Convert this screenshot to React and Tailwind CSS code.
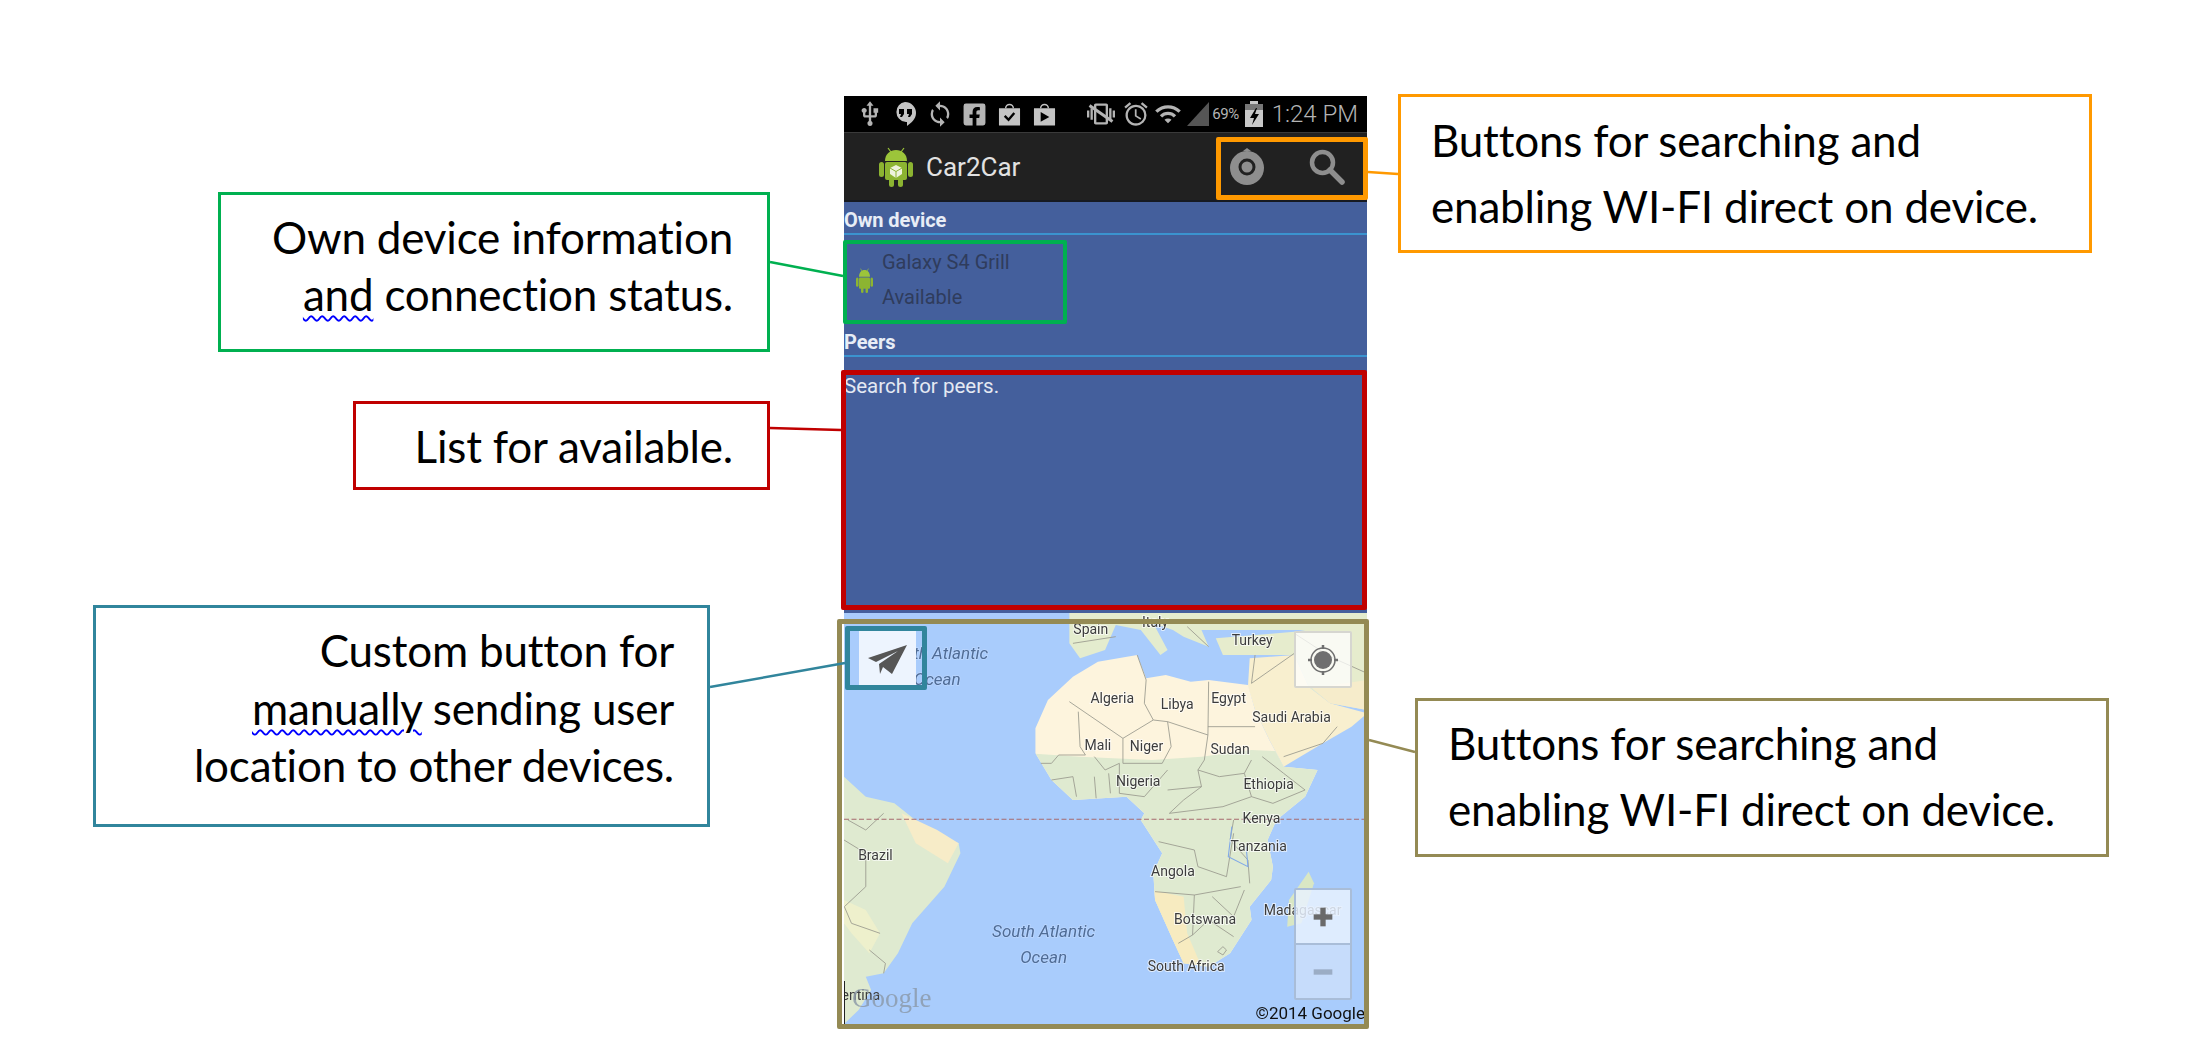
import React from "react";
import { Plus, Minus } from "lucide-react";
import { MdUsb, MdSync, MdAlarm, MdWifi, MdVibration } from "react-icons/md";
import { FaFacebookSquare } from "react-icons/fa";

const AFRICA =
  "M750,185 L860,165 L885,235 L940,225 L1010,245 L1060,240 L1170,255 L1190,330 L1230,420 L1270,500 L1365,510 L1330,590 L1250,660 L1225,720 L1240,800 L1235,840 L1175,920 L1180,960 L1120,1060 L1060,1100 L990,1090 L960,1020 L910,900 L905,820 L930,760 L870,660 L880,640 L830,590 L680,600 L620,540 L575,460 L575,385 L610,300 L680,230 Z";
const BRAZIL =
  "M39,530 L100,590 L180,610 L280,695 L360,730 L365,760 L320,860 L230,970 L190,1060 L150,1120 L100,1130 L115,1170 L80,1230 L39,1272 Z";

const borders = [
  "M670,305 L820,415 L905,360 L880,310 L885,240 L860,165",
  "M695,335 L700,440 L715,465 L640,465 L620,490 L590,490",
  "M905,360 L945,365 L1058,405 L1060,245",
  "M1058,380 L1190,380",
  "M1058,405 L1048,480 L1030,510 L1040,560 L945,570",
  "M945,365 L955,440 L930,490 L820,490 L820,415",
  "M810,490 L810,580 L880,590 L945,510",
  "M740,470 L770,510 L810,490",
  "M620,540 L680,530 L690,590",
  "M740,530 L745,595 M780,520 L785,580",
  "M1030,510 L1090,530 L1160,520 L1180,480",
  "M1160,520 L1180,590 L1240,610 L1330,570 L1270,520 L1210,470",
  "M1040,560 L990,600 L950,640 L1100,620 L1180,590",
  "M1130,660 L1120,720 L1170,780 L1175,850",
  "M920,725 L1020,750 L1030,800 L1110,830 L1130,700",
  "M910,875 L1020,885 L1150,860",
  "M1020,885 L1015,1005 L975,1030",
  "M1070,890 L1130,950 L1160,870",
  "M1015,1005 L1060,960 L1130,1010",
  "M1100,1040 L1085,1055 L1100,1065 L1110,1050 Z",
  "M50,660 L100,690 L150,640",
  "M39,720 L100,760 L100,860 L40,920 L60,970 L140,1000",
  "M110,1050 L155,1090 L150,1120",
  "M1190,165 L1180,250 L1300,160",
  "M1380,430 L1270,470 M1380,430 L1420,380",
  "M680,130 L800,110 M1000,80 L1060,140 M1300,100 L1400,170 L1504,220",
];

const labels = [
  ["Spain", 730, 103],
  ["Italy", 910, 80],
  ["Turkey", 1182, 136],
  ["Algeria", 790, 310],
  ["Libya", 972, 327],
  ["Egypt", 1116, 309],
  ["Saudi Arabia", 1292, 366],
  ["Mali", 750, 449],
  ["Niger", 886, 452],
  ["Sudan", 1120, 462],
  ["Nigeria", 863, 557],
  ["Ethiopia", 1228, 567],
  ["Kenya", 1208, 669],
  ["Tanzania", 1200, 754],
  ["Angola", 960, 829],
  ["Brazil", 127, 779],
  ["Botswana", 1050, 972],
  ["Madagascar", 1323, 945],
  ["South Africa", 997, 1113],
];

const oceans = [
  ["North Atlantic", 300, 178],
  ["Ocean", 300, 256],
  ["South Atlantic", 598, 1010],
  ["Ocean", 598, 1088],
];

function Android({ className, cube }) {
  return (
    <svg viewBox="0 0 34 40" preserveAspectRatio="none" className={className}>
      <path d="M9 1l3 4M25 1l-3 4" stroke="#9cc53a" strokeWidth="1.2" />
      <path d="M6 14C6 7 11 3 17 3s11 4 11 11z" fill="#9cc53a" />
      <rect x="6" y="15" width="22" height="18" rx="2" fill="#8cb431" />
      <rect x="0" y="15" width="5" height="15" rx="2.5" fill="#8cb431" />
      <rect x="29" y="15" width="5" height="15" rx="2.5" fill="#8cb431" />
      <rect x="10" y="31" width="5" height="9" rx="2.5" fill="#8cb431" />
      <rect x="19" y="31" width="5" height="9" rx="2.5" fill="#8cb431" />
      {cube && <path d="M17 18l6 3v6l-6 4-6-4v-6z" fill="#eef3dc" />}
      {cube && <path d="M17 24.500v6.500M11 21l6 3.500 6-3.500" stroke="#8cb431" strokeWidth="1" fill="none" />}
    </svg>
  );
}

function StatusBar() {
  return (
    <div className="h-[36px] bg-black flex items-center justify-between pl-[8px] pr-[9px] text-[#b4b4b4] shrink-0">
      <div className="flex items-center">
        <span className="w-[35px] flex justify-center"><MdUsb size={28} /></span>
        <span className="w-[35px] flex justify-center">
          <svg viewBox="0 0 24 26" className="w-[24px] h-[26px]">
            <path d="M12 1a11 11 0 0 1 11 11c0 6-5 10-9 13v-4a11 9 0 0 1-2-.2A10 10 0 0 1 12 1z" fill="#c4c4c4" />
            <path d="M6 8h5v5l-2 3H7l1-3H6zM14 8h5v5l-2 3h-2l1-3h-2z" fill="#000" />
          </svg>
        </span>
        <span className="w-[35px] flex justify-center"><MdSync size={28} /></span>
        <span className="w-[35px] flex justify-center"><FaFacebookSquare size={25} /></span>
        <span className="w-[35px] flex justify-center">
          <svg viewBox="0 0 24 24" className="w-[23px] h-[24px]">
            <path d="M1 6h22v18H1z" fill="#c4c4c4" />
            <path d="M7 14l4 4 6-7" stroke="#000" strokeWidth="2.500" fill="none" />
            <path d="M8 6a4 4 0 0 1 8 0" stroke="#c4c4c4" strokeWidth="1.500" fill="none" />
          </svg>
        </span>
        <span className="w-[35px] flex justify-center">
          <svg viewBox="0 0 24 24" className="w-[23px] h-[24px]">
            <path d="M1 6h22v18H1z" fill="#c4c4c4" />
            <path d="M8 6a4 4 0 0 1 8 0" stroke="#c4c4c4" strokeWidth="1.500" fill="none" />
            <path d="M8 10l9 5-9 5z" fill="#000" />
          </svg>
        </span>
      </div>
      <div className="flex items-center">
        <span className="relative w-[34px] flex justify-center">
          <MdVibration size={28} />
          <span className="absolute left-[3px] top-[12px] w-[28px] h-[3px] bg-[#b4b4b4] rotate-[35deg]" />
        </span>
        <span className="w-[32px] ml-[2px] flex justify-center"><MdAlarm size={28} /></span>
        <span className="w-[30px] ml-[1px] flex justify-center"><MdWifi size={28} /></span>
        <svg viewBox="0 0 22 24" className="w-[22px] h-[24px] ml-[4px]"><path d="M0 24L22 0v24z" fill="#555" /></svg>
        <span className="ml-[3px] text-[15px] tracking-[-0.5px] font-['Roboto',sans-serif]">69%</span>
        <svg viewBox="0 0 18 26" className="w-[18px] h-[26px] ml-[6px]">
          <path d="M5 0h8v3h5v23H0V3h5z" fill="#c8c8c8" />
          <path d="M0 3h18v6H0z" fill="#777" />
          <path d="M11 7l-6 10h4l-2 7 7-11h-4l2-6z" fill="#000" />
        </svg>
        <span className="ml-[9px] text-[24px] font-light font-['Roboto',sans-serif]">1:24 PM</span>
      </div>
    </div>
  );
}

function ActionBar() {
  return (
    <div className="h-[70px] bg-[#212121] border-t border-[#3a3a3a] border-b-2 border-b-[#161a22] flex items-center shrink-0">
      <Android cube className="ml-[35px] w-[34px] h-[40px]" />
      <span className="ml-[13px] mt-[1px] text-[26px] text-[#e2e2e2] font-['Roboto',sans-serif]">Car2Car</span>
      <svg viewBox="0 0 36 38" className="ml-auto w-[36px] h-[38px]">
        <circle cx="18" cy="20" r="17" fill="#8e8e8e" />
        <path d="M14 3l4-3 4 3z" fill="#8e8e8e" />
        <circle cx="18" cy="19" r="7" fill="#8e8e8e" stroke="#212121" strokeWidth="3" />
      </svg>
      <svg viewBox="0 0 36 36" className="ml-[44px] mr-[22px] w-[36px] h-[36px]">
        <circle cx="13.500" cy="13.500" r="10.500" fill="none" stroke="#8e8e8e" strokeWidth="4.500" />
        <path d="M21 21L33 33" stroke="#8e8e8e" strokeWidth="5.500" strokeLinecap="round" />
      </svg>
    </div>
  );
}

function SectionHead({ children }) {
  return (
    <div className="h-[33px] border-b-[2px] border-[#3b93cf] flex items-center pt-[5px] font-bold text-[20px] text-[#e8edf6] tracking-[-0.1px]">
      {children}
    </div>
  );
}

function DeviceLists() {
  return (
    <div className="h-[411px] bg-[#445f9c] font-['Roboto',sans-serif] shrink-0">
      <SectionHead>Own device</SectionHead>
      <div className="h-[89px] flex items-center">
        <Android className="ml-[12px] mr-[1px] w-[17px] h-[25px] mt-[1px]" />
        <div className="ml-[8px] text-[20px] leading-[35px] text-[#2f3c5c]">
          <div>Galaxy S4 Grill</div>
          <div>Available</div>
        </div>
      </div>
      <SectionHead>Peers</SectionHead>
      <div className="pt-[17px] text-[20.500px] leading-[24px] text-[#e4e9f3]">Search for peers.</div>
    </div>
  );
}

function MapView() {
  return (
    <div className="relative h-[411px] bg-[#a9ccfc] overflow-hidden shrink-0 blur-[0.4px]">
      <svg viewBox="0 0 523 411" className="absolute inset-0 w-full h-full font-['Roboto',sans-serif]">
        <defs>
          <clipPath id="africa"><path d={AFRICA} /></clipPath>
        </defs>
        <g transform="scale(0.35714 0.33333) translate(-39 -39)">
          <path d="M670,39 H1504 V90 H1040 L1060,140 L990,110 L960,90 L905,70 L945,150 L925,165 L870,90 L800,75 L770,150 L700,175 L670,130 Z" fill="#e4ecce" />
          <path d="M1080,115 L1300,95 L1504,60 L1504,330 L1400,310 L1340,260 L1300,165 L1100,165 Z" fill="#e6eccd" />
          <path d="M1175,175 L1300,165 L1340,260 L1400,310 L1504,340 L1460,380 L1380,430 L1270,500 L1230,420 L1190,330 L1170,260 Z" fill="#f8efcf" />
          <path d="M1350,265 L1504,240 L1504,330 L1400,310 Z" fill="#f6eccb" />
          <path d={AFRICA} fill="#fdf4dd" />
          <g clipPath="url(#africa)">
            <path d="M560,460 L700,470 L900,480 L1040,470 L1180,450 L1400,460 L1400,1120 L880,1120 Z" fill="#dfead0" />
            <path d="M900,870 L990,890 L1000,1000 L1040,1100 L960,1110 Z" fill="#f7ebc0" />
          </g>
          <path d={BRAZIL} fill="#dfead0" />
          <path d="M200,640 L300,690 L360,730 L330,790 L240,730 Z" fill="#f7ecc8" />
          <path d="M39,900 L100,930 L140,1000 L110,1060 L60,1000 L39,970 Z" fill="#eef0cc" />
          <path d="M1340,815 L1355,850 L1320,970 L1280,980 L1285,900 Z" fill="#d9e7c4" />
          <g fill="none" stroke="#9a9a8e" strokeWidth="2.500">
            {borders.map((d) => <path key={d} d={d} />)}
          </g>
          <path d="M1125,680 L1115,770 L1170,800 L1165,740" fill="none" stroke="#7fa8e8" strokeWidth="3" />
          <path d="M39,658 H1504" stroke="#a66a6e" strokeWidth="3" strokeDasharray="14 7" />
        </g>
        <g textAnchor="middle" fontSize="14" fill="#3c3c3c" stroke="#ffffff" strokeOpacity="0.65" strokeWidth="2" paintOrder="stroke">
          {labels.map(([name, x, y]) => (
            <text key={name} x={(x - 39) / 2.8} y={(y - 39) / 3}>{name}</text>
          ))}
        </g>
        <g textAnchor="middle" fontSize="17" fontStyle="italic" fill="#4f6c96" stroke="#c5dcff" strokeOpacity="0.7" strokeWidth="1.500" paintOrder="stroke">
          {oceans.map(([name, x, y]) => (
            <text key={name + y} x={(x - 39) / 2.8} y={(y - 39) / 3}>{name}</text>
          ))}
        </g>
        <text x="-24" y="387" fontSize="14" fill="#3c3c3c">Argentina</text>
        <text x="8" y="394" fontSize="27" fill="#8a97a6" fillOpacity="0.8" className="font-['Liberation_Serif',serif]">Google</text>
        <text x="521" y="406" fontSize="17" textAnchor="end" fill="#111">©2014 Google</text>
        <path d="M0.500 368V411" stroke="#222" strokeWidth="1" />
      </svg>

      {/* map controls lie over the map */}
      <div className="absolute left-[15px] top-[18px] w-[57px] h-[55px] bg-[#edf4fe] flex items-center justify-center">
        <svg viewBox="0 0 39 29" className="w-[39px] h-[29px] mt-[2px]">
          <path d="M0 13L39 0 24 29 15 22 12 29 11 19 30 6 8 17z" fill="#565656" />
        </svg>
      </div>
      <div className="absolute left-[450px] top-[18px] w-[58px] h-[57px] bg-white/75 border-2 border-[#d6d6d0] rounded-[2px] flex items-center justify-center">
        <svg viewBox="0 0 30 30" className="w-[30px] h-[30px]">
          <circle cx="15" cy="15" r="9" fill="#6f6f6f" />
          <circle cx="15" cy="15" r="12" fill="none" stroke="#6f6f6f" strokeWidth="1.500" />
          <path d="M15 0v4M15 26v4M0 15h4M26 15h4" stroke="#6f6f6f" strokeWidth="2.500" />
        </svg>
      </div>
      <div className="absolute left-[450px] top-[275px] w-[58px] h-[112px] border-2 border-[#a9bdd8] rounded-[2px] flex flex-col">
        <div className="h-[55px] bg-[#e8f1fe]/85 border-b-2 border-[#a9bdd8] flex items-center justify-center">
          <Plus size={32} strokeWidth={4} strokeLinecap="butt" className="text-[#6a6a6a]" />
        </div>
        <div className="flex-1 bg-[#c6dcfb] flex items-center justify-center">
          <Minus size={32} strokeWidth={4} strokeLinecap="butt" className="text-[#9badc5]" />
        </div>
      </div>
    </div>
  );
}

function Callout({ className, children }) {
  return (
    <div className={`absolute bg-white border-[3px] flex flex-col justify-center whitespace-nowrap text-[#000] text-[44px] font-['Lato',sans-serif] tracking-[-0.2px] ${className}`}>
      {children}
    </div>
  );
}

export default function App() {
  return (
    <div className="relative w-[2199px] h-[1051px] bg-white overflow-hidden">
      <div className="absolute left-[844px] top-[96px] w-[523px] flex flex-col">
        <StatusBar />
        <ActionBar />
        <DeviceLists />
        <MapView />
      </div>

      {/* highlight frames on the phone */}
      <div className="absolute left-[1216px] top-[137px] w-[152px] h-[63px] border-[5px] border-[#ff9900] rounded-[2px]" />
      <div className="absolute left-[843px] top-[240px] w-[224px] h-[84px] border-[4px] border-[#00b050] rounded-[2px]" />
      <div className="absolute left-[841px] top-[370px] w-[526px] h-[240px] border-[5px] border-[#c00000] rounded-[2px]" />
      <div className="absolute left-[837px] top-[619px] w-[532px] h-[410px] border-[5px] border-[#948a54] rounded-[2px]" />
      <div className="absolute left-[845px] top-[626px] w-[82px] h-[64px] border-[5px] border-[#31859c] rounded-[2px]" />

      {/* connector lines */}
      <svg viewBox="0 0 2199 1051" className="absolute inset-0 w-[2199px] h-[1051px] pointer-events-none">
        <path d="M770 262L843 276" stroke="#00b050" strokeWidth="2.500" />
        <path d="M770 428L841 430" stroke="#c00000" strokeWidth="2.500" />
        <path d="M710 687L845 663" stroke="#31859c" strokeWidth="2.500" />
        <path d="M1368 172L1398 174" stroke="#ff9900" strokeWidth="2.500" />
        <path d="M1369 740L1415 752" stroke="#948a54" strokeWidth="2.500" />
      </svg>

      <Callout className="left-[218px] top-[192px] w-[552px] h-[160px] border-[#00b050] items-end pr-[34px] pb-[12px] leading-[57px]">
        <div>Own device information</div>
        <div>
          <span className="underline decoration-wavy decoration-[#0000ff] decoration-[2px] underline-offset-[4px]">and</span> connection status.
        </div>
      </Callout>
      <Callout className="left-[353px] top-[401px] w-[417px] h-[89px] border-[#c00000] items-end pr-[34px] leading-[58px]">
        <div>List for available.</div>
      </Callout>
      <Callout className="left-[93px] top-[605px] w-[617px] h-[222px] border-[#31859c] items-end pr-[33px] pb-[15px] leading-[57.500px]">
        <div>Custom button for</div>
        <div>
          <span className="underline decoration-wavy decoration-[#0000ff] decoration-[2px] underline-offset-[4px]">manually</span> sending user
        </div>
        <div>location to other devices.</div>
      </Callout>
      <Callout className="left-[1398px] top-[94px] w-[694px] h-[159px] border-[#ff9900] items-start pl-[30px] pb-[2px] leading-[66px]">
        <div>Buttons for searching and</div>
        <div>enabling WI-FI direct on device.</div>
      </Callout>
      <Callout className="left-[1415px] top-[698px] w-[694px] h-[159px] border-[#948a54] items-start pl-[30px] pb-[3px] leading-[66px]">
        <div>Buttons for searching and</div>
        <div>enabling WI-FI direct on device.</div>
      </Callout>
    </div>
  );
}
